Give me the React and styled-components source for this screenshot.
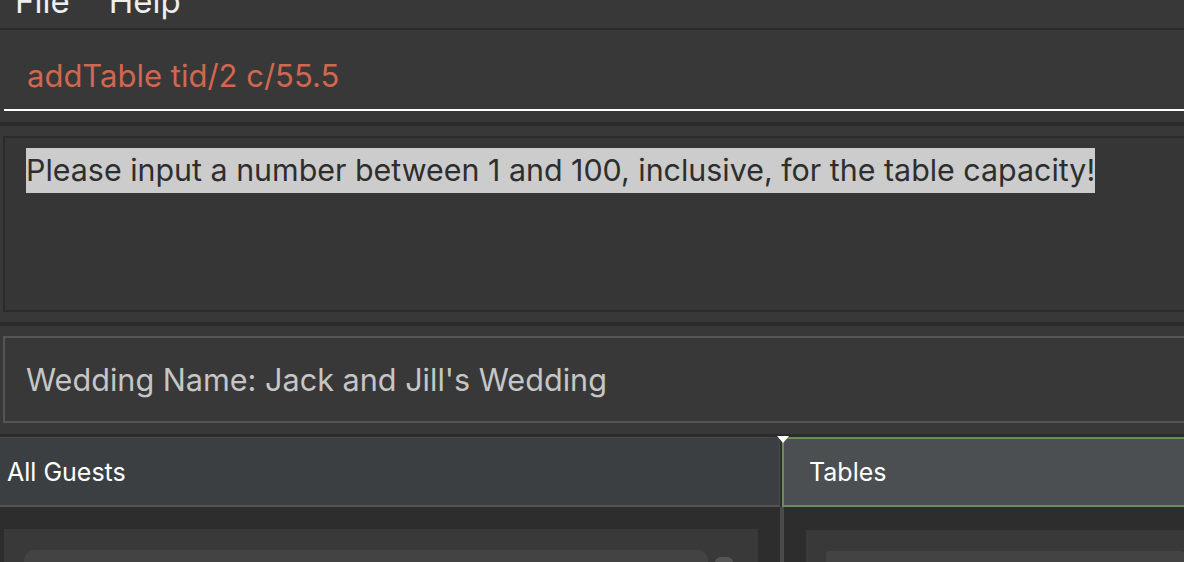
import styled, { createGlobalStyle } from "styled-components";

const GlobalStyle = createGlobalStyle`
  html, body {
    margin: 0;
    padding: 0;
    background: #383838;
    overflow: hidden;
  }
`;

const Window = styled.div`
  width: 1184px;
  height: 562px;
  display: flex;
  flex-direction: column;
  background: #383838;
  font-family: Inter, "Liberation Sans", sans-serif;
  overflow: hidden;
`;

const MenuBar = styled.div`
  height: 28px;
  flex: none;
  display: flex;
  align-items: flex-start;
  gap: 39px;
  padding-left: 15px;
  overflow: hidden;
  border-bottom: 2px solid #2b2b2b;
`;

const MenuItem = styled.span`
  font-size: 33px;
  line-height: 33px;
  margin-top: -15px;
  color: #eeeeee;
`;

const CommandPane = styled.div`
  height: 92px;
  flex: none;
  padding-left: 4px;
  box-sizing: border-box;
`;

const CommandField = styled.div`
  height: 81px;
  box-sizing: border-box;
  border-bottom: 2px solid #ffffff;
  padding: 28px 0 0 23px;
  font-size: 31px;
  line-height: 36px;
  color: #d2674f;
`;

const Divider = styled.div`
  height: ${(p) => p.$h || 4}px;
  flex: none;
  background: #2b2b2b;
`;

const ResultPane = styled.div`
  height: 196px;
  flex: none;
  padding: 10px 0 10px 3px;
  box-sizing: border-box;
`;

const ResultBox = styled.div`
  height: 100%;
  box-sizing: border-box;
  border: 2px solid #2b2b2b;
  border-right: none;
  background: #363636;
  padding: 10px 0 0 21px;
`;

const Selected = styled.span`
  display: inline-block;
  background: #cccccc;
  color: #2e2e2e;
  font-size: 30.4px;
  line-height: 45px;
  white-space: nowrap;
`;

const WeddingPane = styled.div`
  height: 108px;
  flex: none;
  padding: 10px 0 11px 3px;
  box-sizing: border-box;
`;

const WeddingBox = styled.div`
  height: 100%;
  box-sizing: border-box;
  border: 2px solid #555555;
  border-right: none;
  display: flex;
  align-items: center;
  padding-left: 21px;
  font-size: 30.6px;
  color: #c6c6c6;
`;

const TabArea = styled.div`
  flex: 1;
  display: flex;
  flex-direction: column;
  background: #2d2d2d;
  position: relative;
`;

const TabHeaders = styled.div`
  height: 70px;
  flex: none;
  display: flex;
  gap: 2px;
`;

const Tab = styled.div`
  box-sizing: border-box;
  display: flex;
  align-items: center;
  font-size: 25px;
  color: #ffffff;
  ${(p) =>
    p.$active
      ? `
    flex: 1;
    background: #4b4f52;
    border: 2px solid #6b8c5b;
    border-right: none;
    border-top-left-radius: 6px;
    padding-left: 25px;
  `
      : `
    width: 780px;
    background: #3b3f42;
    border-top: 1px solid #4a4a4a;
    border-right: 1px solid #4a4a4a;
    border-bottom: 2px solid #555555;
    border-top-right-radius: 6px;
    padding-left: 7px;
  `}
`;

// little white notch where the two tabs meet
const Marker = styled.div`
  position: absolute;
  left: 777px;
  top: -1px;
  width: 0;
  height: 0;
  border-left: 6px solid transparent;
  border-right: 6px solid transparent;
  border-top: 7px solid #ffffff;
`;

const TabBody = styled.div`
  flex: 1;
  display: flex;
`;

const Pane = styled.div`
  box-sizing: border-box;
  ${(p) =>
    p.$right
      ? `flex: 1; padding: 23px 0 0 22px;`
      : `width: 780px; padding: 22px 22px 0 4px;`}
`;

const VSplit = styled.div`
  width: 4px;
  flex: none;
  background: #4b4b4b;
`;

const ListView = styled.div`
  height: 100%;
  background: #393939;
  display: flex;
  gap: 7px;
  padding: 21px ${(p) => (p.$open ? 0 : 25)}px 0 20px;
  box-sizing: border-box;
`;

const Cell = styled.div`
  flex: 1;
  height: 40px;
  background: #434343;
  border-radius: ${(p) => (p.$square ? 3 : 10)}px;
`;

const Thumb = styled.div`
  width: 18px;
  height: 30px;
  margin-top: 7px;
  background: #555555;
  border-radius: 6px;
`;

export default function App() {
  return (
    <Window>
      <GlobalStyle />
      <MenuBar>
        <MenuItem>File</MenuItem>
        <MenuItem>Help</MenuItem>
      </MenuBar>
      <CommandPane>
        <CommandField>addTable tid/2 c/55.5</CommandField>
      </CommandPane>
      <Divider />
      <ResultPane>
        <ResultBox>
          <Selected>
            Please input a number between 1 and 100, inclusive, for the table capacity!
          </Selected>
        </ResultBox>
      </ResultPane>
      <Divider />
      <WeddingPane>
        <WeddingBox>Wedding Name: Jack and Jill's Wedding</WeddingBox>
      </WeddingPane>
      <Divider $h={3} />
      <TabArea>
        <TabHeaders>
          <Tab>All Guests</Tab>
          <Tab $active>Tables</Tab>
        </TabHeaders>
        <Marker />
        <TabBody>
          <Pane>
            <ListView>
              <Cell />
              <Thumb />
            </ListView>
          </Pane>
          <VSplit />
          <Pane $right>
            <ListView $open>
              <Cell $square />
            </ListView>
          </Pane>
        </TabBody>
      </TabArea>
    </Window>
  );
}
